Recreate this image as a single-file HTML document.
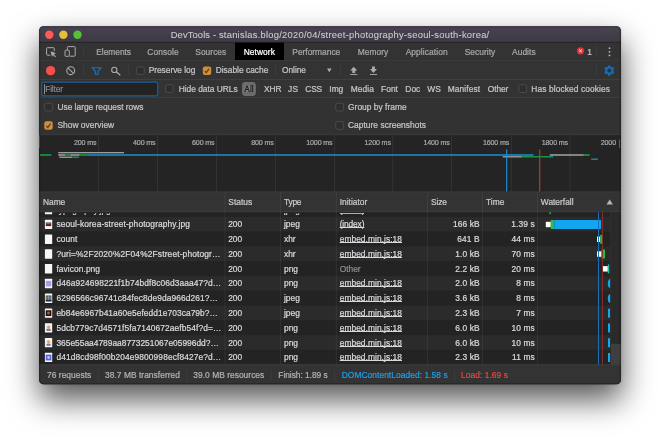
<!DOCTYPE html>
<html lang="en">
<head>
<meta charset="utf-8">
<title>DevTools - stanislas.blog/2020/04/street-photography-seoul-south-korea/</title>
<style>
html,body{margin:0;padding:0;background:#fff;}
body{width:660px;height:437px;overflow:hidden;position:relative;font-family:"Liberation Sans",sans-serif;}
#root{position:absolute;left:0;top:0;width:660px;height:437px;overflow:hidden;will-change:transform;background:#fff;}
#shadow{position:absolute;left:39.5px;top:26.5px;width:581px;height:357.5px;border-radius:4.5px;background:#2b2b2b;
  box-shadow:0 15px 31px 0.5px rgba(0,0,0,.66),0 0 3px rgba(0,0,0,.18);}
#g{position:absolute;left:0;top:0;}
#root{filter:blur(0.3px);}
.t{position:absolute;white-space:pre;line-height:12px;height:12px;font-family:"Liberation Sans",sans-serif;
  -webkit-text-stroke:0.22px currentColor;text-decoration-thickness:0.45px;text-underline-offset:0.4px;text-decoration-skip-ink:none;}
</style>
</head>
<body>
<div id="root">
<div id="shadow"></div>
<svg id="g" width="660" height="437" viewBox="0 0 660 437">
<defs>
<clipPath id="wc"><rect x="39.1" y="26.2" width="581.7" height="358.1" rx="4.5"/></clipPath>
<clipPath id="rc"><rect x="39" y="212.3" width="582" height="152.4"/></clipPath>
<linearGradient id="tg" x1="0" y1="0" x2="0" y2="1"><stop offset="0" stop-color="#48434f"/><stop offset="1" stop-color="#3e3a45"/></linearGradient>
</defs>
<g clip-path="url(#wc)">
<rect x="39" y="26" width="582" height="359" fill="#242424"/>
<rect x="39.00" y="26.00" width="582.00" height="16.20" fill="url(#tg)"/>
<rect x="39.00" y="26.20" width="582.00" height="0.60" fill="#5b5662"/>
<rect x="39.00" y="41.90" width="582.00" height="0.80" fill="#1a1a1a"/>
<circle cx="49.30" cy="34.70" r="4.20" fill="#fc5b57"/>
<circle cx="63.40" cy="34.70" r="4.20" fill="#e5bf3c"/>
<circle cx="77.50" cy="34.70" r="4.20" fill="#57c038"/>
<rect x="39.00" y="42.60" width="582.00" height="17.60" fill="#333333"/>
<rect x="235.00" y="42.70" width="49.00" height="17.50" fill="#000000"/>
<rect x="39.00" y="60.30" width="582.00" height="0.80" fill="#454545"/>
<rect x="83.40" y="46.30" width="0.70" height="10.20" fill="#414141"/>
<rect x="596.30" y="46.30" width="0.70" height="10.20" fill="#414141"/>
<rect x="39.00" y="60.80" width="582.00" height="18.40" fill="#333333"/>
<rect x="39.00" y="79.00" width="582.00" height="0.80" fill="#464646"/>
<rect x="83.40" y="65.30" width="0.70" height="10.40" fill="#414141"/>
<rect x="128.40" y="65.30" width="0.70" height="10.40" fill="#414141"/>
<rect x="275.00" y="65.30" width="0.70" height="10.40" fill="#414141"/>
<rect x="340.40" y="65.30" width="0.70" height="10.40" fill="#414141"/>
<rect x="596.30" y="65.30" width="0.70" height="10.40" fill="#414141"/>
<rect x="39.00" y="80.00" width="582.00" height="17.30" fill="#333333"/>
<rect x="39.00" y="97.30" width="582.00" height="0.80" fill="#464646"/>
<rect x="41.7" y="82.2" width="116.0" height="13.6" rx="1.2" fill="#232323" stroke="#1a5f96" stroke-width="1.2"/>
<rect x="44.20" y="84.20" width="0.70" height="10.20" fill="#bbbbbb"/>
<rect x="242.00" y="82.00" width="13.90" height="14.00" fill="#6c6c6c" rx="3.4"/>
<rect x="258.40" y="83.50" width="0.70" height="11.00" fill="#414141"/>
<rect x="39.00" y="98.10" width="582.00" height="36.50" fill="#323232"/>
<rect x="39.00" y="134.55" width="582.00" height="0.85" fill="#474747"/>
<rect x="39.00" y="135.40" width="582.00" height="56.40" fill="#242424"/>
<rect x="98.05" y="135.40" width="0.70" height="56.40" fill="#393939"/>
<rect x="157.15" y="135.40" width="0.70" height="56.40" fill="#393939"/>
<rect x="216.15" y="135.40" width="0.70" height="56.40" fill="#393939"/>
<rect x="275.25" y="135.40" width="0.70" height="56.40" fill="#393939"/>
<rect x="334.15" y="135.40" width="0.70" height="56.40" fill="#393939"/>
<rect x="392.45" y="135.40" width="0.70" height="56.40" fill="#393939"/>
<rect x="451.35" y="135.40" width="0.70" height="56.40" fill="#393939"/>
<rect x="510.85" y="135.40" width="0.70" height="56.40" fill="#393939"/>
<rect x="569.65" y="135.40" width="0.70" height="56.40" fill="#393939"/>
<rect x="39.00" y="135.50" width="0.80" height="12.50" fill="#6a6a6a"/>
<rect x="619.10" y="139.50" width="0.80" height="8.50" fill="#7a7a7a"/>
<rect x="40.00" y="154.25" width="9.30" height="1.50" fill="#17a744"/>
<rect x="49.30" y="154.25" width="2.00" height="1.50" fill="#1a8fd1"/>
<rect x="58.30" y="152.05" width="65.70" height="1.30" fill="#a3a3a3"/>
<rect x="58.30" y="154.25" width="6.90" height="1.50" fill="#a3a3a3"/>
<rect x="65.20" y="154.25" width="4.10" height="1.50" fill="#17a744"/>
<rect x="69.30" y="154.25" width="1.00" height="1.50" fill="#1a8fd1"/>
<rect x="70.30" y="154.25" width="9.40" height="1.50" fill="#a3a3a3"/>
<rect x="79.70" y="154.25" width="7.60" height="1.50" fill="#17a744"/>
<rect x="87.30" y="154.25" width="446.20" height="1.50" fill="#1a8fd1"/>
<rect x="59.30" y="156.55" width="13.00" height="1.30" fill="#a3a3a3"/>
<rect x="72.30" y="156.55" width="5.40" height="1.30" fill="#17a744"/>
<rect x="77.70" y="156.55" width="1.30" height="1.30" fill="#1a8fd1"/>
<rect x="502.70" y="156.15" width="19.10" height="1.30" fill="#a3a3a3"/>
<rect x="521.80" y="156.15" width="29.70" height="1.30" fill="#17a744"/>
<rect x="551.50" y="156.15" width="1.50" height="1.30" fill="#1a8fd1"/>
<rect x="549.80" y="154.25" width="34.00" height="1.50" fill="#a3a3a3"/>
<rect x="583.80" y="154.25" width="5.90" height="1.50" fill="#17a744"/>
<rect x="591.20" y="158.55" width="1.80" height="1.30" fill="#17a744"/>
<rect x="593.00" y="158.55" width="4.80" height="1.30" fill="#1a8fd1"/>
<rect x="506.10" y="149.30" width="1.15" height="42.50" fill="#1b8fd6"/>
<rect x="539.20" y="149.30" width="1.05" height="42.50" fill="#b3433d"/>
<rect x="39.00" y="191.70" width="582.00" height="20.60" fill="#333333"/>
<rect x="39.00" y="191.60" width="582.00" height="0.70" fill="#3f3f3f"/>
<rect x="39.00" y="211.60" width="582.00" height="0.75" fill="#474747"/>
<g clip-path="url(#rc)">
<rect x="39.00" y="202.13" width="571.40" height="14.81" fill="#232323"/>
<rect x="39.00" y="216.91" width="571.40" height="14.81" fill="#2b2b2b"/>
<rect x="39.00" y="231.69" width="571.40" height="14.81" fill="#232323"/>
<rect x="39.00" y="246.47" width="571.40" height="14.81" fill="#2b2b2b"/>
<rect x="39.00" y="261.25" width="571.40" height="14.81" fill="#232323"/>
<rect x="39.00" y="276.03" width="571.40" height="14.81" fill="#2b2b2b"/>
<rect x="39.00" y="290.81" width="571.40" height="14.81" fill="#232323"/>
<rect x="39.00" y="305.59" width="571.40" height="14.81" fill="#2b2b2b"/>
<rect x="39.00" y="320.37" width="571.40" height="14.81" fill="#232323"/>
<rect x="39.00" y="335.15" width="571.40" height="14.81" fill="#2b2b2b"/>
<rect x="39.00" y="349.93" width="571.40" height="14.81" fill="#232323"/>
<rect x="39.00" y="364.71" width="571.40" height="14.81" fill="#2b2b2b"/>
<rect x="610.30" y="212.00" width="10.80" height="153.00" fill="#2a2a2a"/>
<rect x="549.40" y="211.00" width="1.50" height="3.10" fill="#1fc343"/>
<rect x="545.80" y="221.80" width="5.00" height="5.40" fill="#ffffff"/>
<rect x="550.80" y="220.00" width="3.50" height="9.00" fill="#1fc343"/>
<rect x="554.30" y="220.00" width="46.70" height="9.00" fill="#12a6f2"/>
<rect x="597.00" y="236.58" width="3.20" height="5.40" fill="#ffffff"/>
<rect x="600.20" y="234.78" width="2.60" height="9.00" fill="#1fc343"/>
<rect x="597.00" y="251.36" width="4.50" height="5.40" fill="#ffffff"/>
<rect x="601.50" y="249.56" width="3.50" height="9.00" fill="#1fc343"/>
<rect x="602.80" y="266.14" width="5.00" height="5.40" fill="#ffffff"/>
<rect x="607.80" y="264.34" width="1.40" height="9.00" fill="#18c3a0"/>
<path d="M614 279.12H610.6Q607.8 279.12 607.8 283.62Q607.8 288.12 610.6 288.12H614Z" fill="#12a6f2"/>
<path d="M614 293.90H610.6Q607.8 293.90 607.8 298.40Q607.8 302.90 610.6 302.90H614Z" fill="#12a6f2"/>
<rect x="608.00" y="308.68" width="2.30" height="9.00" fill="#12a6f2"/>
<rect x="608.00" y="323.46" width="2.30" height="9.00" fill="#12a6f2"/>
<rect x="608.00" y="338.24" width="2.30" height="9.00" fill="#12a6f2"/>
<rect x="608.00" y="353.02" width="2.30" height="9.00" fill="#12a6f2"/>
<rect x="598.00" y="212.00" width="1.00" height="153.00" fill="#1b6fb8"/>
<rect x="601.90" y="212.00" width="1.00" height="153.00" fill="#8c2f2b"/>
<rect x="610.30" y="212.00" width="10.80" height="153.00" fill="#2a2a2a"/>
<rect x="610.30" y="212.00" width="0.60" height="153.00" fill="#333333"/>
<rect x="610.90" y="343.80" width="10.20" height="20.60" fill="#3f3f3f"/>
<rect x="44.90" y="204.92" width="7.30" height="9.40" fill="#f7f7f7" rx="0.5"/>
<rect x="44.90" y="219.70" width="7.30" height="9.40" fill="#f7f7f7" rx="0.5"/>
<rect x="45.85" y="222.55" width="5.35" height="3.55" fill="#4e241c"/>
<rect x="46.50" y="222.90" width="4.00" height="1.30" fill="#a8604e"/>
<rect x="46.20" y="224.30" width="4.70" height="1.30" fill="#6a2e22"/>
<rect x="44.90" y="234.48" width="7.30" height="9.40" fill="#f7f7f7" rx="0.5"/>
<rect x="44.90" y="249.26" width="7.30" height="9.40" fill="#f7f7f7" rx="0.5"/>
<rect x="44.90" y="264.04" width="7.30" height="9.40" fill="#f7f7f7" rx="0.5"/>
<rect x="44.90" y="278.82" width="7.30" height="9.40" fill="#f7f7f7" rx="0.5"/>
<rect x="45.80" y="280.82" width="5.50" height="5.60" fill="#a999ef"/>
<rect x="44.90" y="293.60" width="7.30" height="9.40" fill="#f7f7f7" rx="0.5"/>
<rect x="45.70" y="295.50" width="5.70" height="5.80" fill="#2c3e5c"/>
<rect x="46.40" y="296.20" width="1.00" height="3.60" fill="#c9a545"/>
<rect x="48.00" y="296.00" width="1.00" height="3.90" fill="#6f94c9"/>
<rect x="49.50" y="296.20" width="1.00" height="3.60" fill="#c9a545"/>
<rect x="45.70" y="300.00" width="5.70" height="1.30" fill="#1d2a40"/>
<rect x="44.90" y="308.38" width="7.30" height="9.40" fill="#f7f7f7" rx="0.5"/>
<rect x="45.70" y="310.28" width="5.70" height="5.80" fill="#26100a"/>
<rect x="47.00" y="311.38" width="3.00" height="3.40" fill="#8a4326" rx="1.3"/>
<rect x="47.60" y="311.98" width="1.80" height="1.60" fill="#b5683e" rx="0.8"/>
<rect x="44.90" y="323.16" width="7.30" height="9.40" fill="#f7f7f7" rx="0.5"/>
<rect x="45.80" y="324.96" width="5.50" height="6.00" fill="#f8e3d3"/>
<rect x="47.20" y="325.66" width="2.70" height="2.90" fill="#e39a70" rx="1.35"/>
<rect x="46.40" y="328.86" width="4.30" height="2.10" fill="#5f7fb5" rx="0.9"/>
<rect x="48.00" y="328.46" width="1.10" height="1.00" fill="#e39a70"/>
<rect x="44.90" y="337.94" width="7.30" height="9.40" fill="#f7f7f7" rx="0.5"/>
<rect x="45.80" y="339.74" width="5.50" height="6.00" fill="#f8e3d3"/>
<rect x="47.20" y="340.44" width="2.70" height="2.90" fill="#e39a70" rx="1.35"/>
<rect x="46.40" y="343.64" width="4.30" height="2.10" fill="#5f7fb5" rx="0.9"/>
<rect x="48.00" y="343.24" width="1.10" height="1.00" fill="#e39a70"/>
<rect x="44.90" y="352.72" width="7.30" height="9.40" fill="#f7f7f7" rx="0.5"/>
<rect x="45.70" y="354.62" width="5.70" height="5.80" fill="#5563ea"/>
<rect x="47.10" y="356.02" width="2.90" height="3.00" fill="#a6adf6" rx="1.45"/>
<rect x="47.90" y="356.82" width="1.30" height="1.40" fill="#e4e6ff" rx="0.65"/>
</g>
<rect x="224.65" y="192.30" width="0.70" height="172.60" fill="#ffffff" opacity="0.085"/>
<rect x="280.25" y="192.30" width="0.70" height="172.60" fill="#ffffff" opacity="0.085"/>
<rect x="335.85" y="192.30" width="0.70" height="172.60" fill="#ffffff" opacity="0.085"/>
<rect x="427.35" y="192.30" width="0.70" height="172.60" fill="#ffffff" opacity="0.085"/>
<rect x="482.35" y="192.30" width="0.70" height="172.60" fill="#ffffff" opacity="0.085"/>
<rect x="537.35" y="192.30" width="0.70" height="172.60" fill="#ffffff" opacity="0.085"/>
<rect x="39.00" y="364.90" width="582.00" height="20.00" fill="#333333"/>
<rect x="39.00" y="364.50" width="582.00" height="0.75" fill="#464646"/>
<rect x="97.80" y="369.90" width="0.70" height="10.50" fill="#414141"/>
<rect x="186.50" y="369.90" width="0.70" height="10.50" fill="#414141"/>
<rect x="270.80" y="369.90" width="0.70" height="10.50" fill="#414141"/>
<rect x="334.20" y="369.90" width="0.70" height="10.50" fill="#414141"/>
<rect x="454.20" y="369.90" width="0.70" height="10.50" fill="#414141"/>
<path d="M54.2 51.2V48.4Q54.2 47.7 53.5 47.7H47.3Q46.6 47.7 46.6 48.4V54.5Q46.6 55.2 47.3 55.2H50.2" fill="none" stroke="#a9abae" stroke-width="1.0"/>
<path d="M50.6 51.2L56.0 53.3L53.8 54.2L56.0 56.4L55.1 57.2L52.9 55.0L52.0 57.1Z" fill="#a9abae"/>
<path d="M67.4 49.6V47.4Q67.4 46.6 68.2 46.6H74.4Q75.2 46.6 75.2 47.4V55.4Q75.2 56.2 74.4 56.2H69.6" fill="none" stroke="#a9abae" stroke-width="1.0"/>
<rect x="65.0" y="50.2" width="4.3" height="6.1" rx="0.8" fill="none" stroke="#a9abae" stroke-width="1.0"/>
<circle cx="50.60" cy="70.65" r="4.65" fill="#f8504d"/>
<circle cx="70.7" cy="70.65" r="3.95" fill="none" stroke="#a9abae" stroke-width="1.1"/>
<path d="M67.9 67.85L73.5 73.45" fill="none" stroke="#a9abae" stroke-width="1.1"/>
<path d="M92.2 67.7H101.1L98.1 71.4V74.2H95.2V71.4Z" fill="none" stroke="#1b76c4" stroke-width="1.15" stroke-linejoin="round"/>
<circle cx="114.3" cy="69.9" r="2.6" fill="none" stroke="#a9abae" stroke-width="1.1"/>
<path d="M116.2 71.8L120.3 75.3" fill="none" stroke="#a9abae" stroke-width="1.3"/>
<path d="M327.0 68.6H331.6L329.3 72.3Z" fill="#a9abae"/>
<path d="M353.75 66.8L357.3 70.5H355.2V72.9H352.3V70.5H350.2Z" fill="#a9abae"/>
<rect x="350.20" y="74.10" width="7.10" height="0.90" fill="#a9abae"/>
<path d="M373.45 72.9L377.0 69.1H374.9V66.4H372.0V69.1H369.9Z" fill="#a9abae"/>
<rect x="369.90" y="74.10" width="7.10" height="0.90" fill="#a9abae"/>
<g fill="#176cb8"><rect x="608.05" y="65.50" width="2.5" height="2.6" rx="0.4" transform="rotate(0 609.30 70.60)"/><rect x="608.05" y="65.50" width="2.5" height="2.6" rx="0.4" transform="rotate(60 609.30 70.60)"/><rect x="608.05" y="65.50" width="2.5" height="2.6" rx="0.4" transform="rotate(120 609.30 70.60)"/><rect x="608.05" y="65.50" width="2.5" height="2.6" rx="0.4" transform="rotate(180 609.30 70.60)"/><rect x="608.05" y="65.50" width="2.5" height="2.6" rx="0.4" transform="rotate(240 609.30 70.60)"/><rect x="608.05" y="65.50" width="2.5" height="2.6" rx="0.4" transform="rotate(300 609.30 70.60)"/></g><circle cx="609.30" cy="70.60" r="3.05" fill="none" stroke="#176cb8" stroke-width="1.9"/>
<circle cx="580.50" cy="50.80" r="3.60" fill="#e2303d"/>
<path d="M579.2 49.5L581.8 52.1M581.8 49.5L579.2 52.1" fill="none" stroke="#ffffff" stroke-width="0.9"/>
<circle cx="609.50" cy="48.20" r="0.90" fill="#b9bbbe"/>
<circle cx="609.50" cy="51.80" r="0.90" fill="#b9bbbe"/>
<circle cx="609.50" cy="55.40" r="0.90" fill="#b9bbbe"/>
<path d="M609.7 199.4L612.9 204.6H606.5Z" fill="#b4b6b9"/>
<rect x="136.55" y="66.85" width="7.7" height="7.7" rx="1.7" fill="#2e2e2e" stroke="#565656" stroke-width="0.7"/>
<rect x="202.80" y="66.50" width="8.40" height="8.40" fill="#cd8f39" rx="2"/>
<path d="M204.90 70.95l1.35 1.75 2.7-3.85" fill="none" stroke="#4a3110" stroke-width="1.05"/>
<rect x="165.55" y="84.80" width="7.7" height="7.7" rx="1.7" fill="#2e2e2e" stroke="#565656" stroke-width="0.7"/>
<rect x="518.85" y="84.80" width="7.7" height="7.7" rx="1.7" fill="#2e2e2e" stroke="#565656" stroke-width="0.7"/>
<rect x="44.65" y="103.25" width="7.7" height="7.7" rx="1.7" fill="#2e2e2e" stroke="#565656" stroke-width="0.7"/>
<rect x="44.30" y="121.30" width="8.40" height="8.40" fill="#cd8f39" rx="2"/>
<path d="M46.40 125.75l1.35 1.75 2.7-3.85" fill="none" stroke="#4a3110" stroke-width="1.05"/>
<rect x="335.75" y="103.25" width="7.7" height="7.7" rx="1.7" fill="#2e2e2e" stroke="#565656" stroke-width="0.7"/>
<rect x="335.75" y="121.65" width="7.7" height="7.7" rx="1.7" fill="#2e2e2e" stroke="#565656" stroke-width="0.7"/>
<rect x="39.1" y="26.2" width="581.7" height="358.1" rx="4.5" fill="none" stroke="#000" stroke-opacity="0.2" stroke-width="2.6"/>
</g>
</svg>
<span class="t" style="top:28.85px;font-size:9.35px;color:#cbc9cf;letter-spacing:0.133px;left:170.70px;-webkit-text-stroke:0.1px currentColor;">DevTools - </span>
<span class="t" style="top:28.85px;font-size:9.35px;color:#cbc9cf;letter-spacing:0.268px;left:218.90px;-webkit-text-stroke:0.1px currentColor;">stanislas.blog/2020/04/street-photography-seoul-south-korea/</span>
<span class="t" style="top:45.55px;font-size:8.4px;color:#a6a8ab;letter-spacing:-0.028px;left:96.30px;">Elements</span>
<span class="t" style="top:45.55px;font-size:8.4px;color:#a6a8ab;letter-spacing:0.095px;left:147.30px;">Console</span>
<span class="t" style="top:45.55px;font-size:8.4px;color:#a6a8ab;letter-spacing:0.038px;left:195.30px;">Sources</span>
<span class="t" style="top:45.55px;font-size:8.4px;color:#a6a8ab;left:292.30px;">Performance</span>
<span class="t" style="top:45.55px;font-size:8.4px;color:#a6a8ab;letter-spacing:0.058px;left:357.70px;">Memory</span>
<span class="t" style="top:45.55px;font-size:8.4px;color:#a6a8ab;letter-spacing:0.092px;left:405.70px;">Application</span>
<span class="t" style="top:45.55px;font-size:8.4px;color:#a6a8ab;letter-spacing:0.042px;left:464.70px;">Security</span>
<span class="t" style="top:45.55px;font-size:8.4px;color:#a6a8ab;letter-spacing:0.070px;left:512.00px;">Audits</span>
<span class="t" style="top:45.55px;font-size:8.4px;color:#ffffff;letter-spacing:0.083px;left:243.70px;">Network</span>
<span class="t" style="top:45.55px;font-size:8.4px;color:#c4c6c9;letter-spacing:-0.600px;left:587.30px;">1</span>
<span class="t" style="top:64.30px;font-size:8.4px;color:#c4c6c9;letter-spacing:-0.035px;left:148.70px;">Preserve log</span>
<span class="t" style="top:64.30px;font-size:8.4px;color:#c4c6c9;left:215.70px;">Disable cache</span>
<span class="t" style="top:64.30px;font-size:8.4px;color:#c4c6c9;letter-spacing:-0.036px;left:282.00px;">Online</span>
<span class="t" style="top:82.80px;font-size:8.4px;color:#858789;letter-spacing:-0.171px;left:45.20px;">Filter</span>
<span class="t" style="top:82.60px;font-size:8.4px;color:#c4c6c9;letter-spacing:-0.009px;left:178.70px;">Hide data URLs</span>
<span class="t" style="top:82.60px;font-size:8.4px;color:#1c1c1c;letter-spacing:0.029px;left:244.30px;-webkit-text-stroke:0.45px #181818;text-shadow:0 0 1.5px rgba(255,255,255,.9),0 0 1px rgba(255,255,255,.7);">All</span>
<span class="t" style="top:82.60px;font-size:8.4px;color:#c4c6c9;letter-spacing:-0.129px;left:264.00px;">XHR</span>
<span class="t" style="top:82.60px;font-size:8.4px;color:#c4c6c9;letter-spacing:0.259px;left:288.00px;">JS</span>
<span class="t" style="top:82.60px;font-size:8.4px;color:#c4c6c9;letter-spacing:-0.178px;left:305.30px;">CSS</span>
<span class="t" style="top:82.60px;font-size:8.4px;color:#c4c6c9;letter-spacing:0.010px;left:329.30px;">Img</span>
<span class="t" style="top:82.60px;font-size:8.4px;color:#c4c6c9;letter-spacing:0.098px;left:350.70px;">Media</span>
<span class="t" style="top:82.60px;font-size:8.4px;color:#c4c6c9;letter-spacing:0.059px;left:381.00px;">Font</span>
<span class="t" style="top:82.60px;font-size:8.4px;color:#c4c6c9;letter-spacing:0.031px;left:405.30px;">Doc</span>
<span class="t" style="top:82.60px;font-size:8.4px;color:#c4c6c9;letter-spacing:-0.050px;left:427.30px;">WS</span>
<span class="t" style="top:82.60px;font-size:8.4px;color:#c4c6c9;letter-spacing:0.118px;left:447.70px;">Manifest</span>
<span class="t" style="top:82.60px;font-size:8.4px;color:#c4c6c9;letter-spacing:-0.071px;left:487.70px;">Other</span>
<span class="t" style="top:82.60px;font-size:8.4px;color:#c4c6c9;letter-spacing:0.099px;left:531.30px;">Has blocked cookies</span>
<span class="t" style="top:101.20px;font-size:8.4px;color:#c4c6c9;left:57.40px;">Use large request rows</span>
<span class="t" style="top:119.30px;font-size:8.4px;color:#c4c6c9;letter-spacing:0.036px;left:57.40px;">Show overview</span>
<span class="t" style="top:101.20px;font-size:8.4px;color:#c4c6c9;letter-spacing:0.037px;left:348.00px;">Group by frame</span>
<span class="t" style="top:119.40px;font-size:8.4px;color:#c4c6c9;letter-spacing:0.038px;left:348.00px;">Capture screenshots</span>
<span class="t" style="top:136.55px;font-size:7.1px;color:#a6a8ab;right:563.60px;letter-spacing:-0.13px;">200 ms</span>
<span class="t" style="top:136.55px;font-size:7.1px;color:#a6a8ab;right:504.50px;letter-spacing:-0.13px;">400 ms</span>
<span class="t" style="top:136.55px;font-size:7.1px;color:#a6a8ab;right:445.50px;letter-spacing:-0.13px;">600 ms</span>
<span class="t" style="top:136.55px;font-size:7.1px;color:#a6a8ab;right:386.40px;letter-spacing:-0.13px;">800 ms</span>
<span class="t" style="top:136.55px;font-size:7.1px;color:#a6a8ab;right:327.50px;letter-spacing:-0.13px;">1000 ms</span>
<span class="t" style="top:136.55px;font-size:7.1px;color:#a6a8ab;right:269.20px;letter-spacing:-0.13px;">1200 ms</span>
<span class="t" style="top:136.55px;font-size:7.1px;color:#a6a8ab;right:210.30px;letter-spacing:-0.13px;">1400 ms</span>
<span class="t" style="top:136.55px;font-size:7.1px;color:#a6a8ab;right:150.80px;letter-spacing:-0.13px;">1600 ms</span>
<span class="t" style="top:136.55px;font-size:7.1px;color:#a6a8ab;right:92.00px;letter-spacing:-0.13px;">1800 ms</span>
<span class="t" style="top:136.55px;font-size:7.1px;color:#a6a8ab;right:33.00px;letter-spacing:-0.13px;clip-path:inset(0 9.70px 0 0);">2000 ms</span>
<span class="t" style="top:196.10px;font-size:8.4px;color:#c9cbce;letter-spacing:-0.036px;left:43.00px;">Name</span>
<span class="t" style="top:196.10px;font-size:8.4px;color:#c9cbce;letter-spacing:0.042px;left:228.30px;">Status</span>
<span class="t" style="top:196.10px;font-size:8.4px;color:#c9cbce;letter-spacing:-0.214px;left:284.00px;">Type</span>
<span class="t" style="top:196.10px;font-size:8.4px;color:#c9cbce;letter-spacing:0.015px;left:339.70px;">Initiator</span>
<span class="t" style="top:196.10px;font-size:8.4px;color:#c9cbce;letter-spacing:-0.149px;left:431.00px;">Size</span>
<span class="t" style="top:196.10px;font-size:8.4px;color:#c9cbce;left:486.00px;">Time</span>
<span class="t" style="top:196.10px;font-size:8.4px;color:#c9cbce;left:540.80px;">Waterfall</span>
<span class="t" style="top:218.30px;font-size:8.4px;color:#d8dadd;letter-spacing:0.114px;left:56.40px;">seoul-korea-street-photography.jpg</span>
<span class="t" style="top:218.30px;font-size:8.4px;color:#d8dadd;letter-spacing:-0.095px;left:228.30px;">200</span>
<span class="t" style="top:218.30px;font-size:8.4px;color:#d8dadd;left:284.00px;">jpeg</span>
<span class="t" style="top:218.30px;font-size:8.4px;color:#d8dadd;letter-spacing:-0.144px;left:339.70px;text-decoration:underline;">(index)</span>
<span class="t" style="top:218.30px;font-size:8.4px;color:#d8dadd;right:180.20px;letter-spacing:0.12px;">166 kB</span>
<span class="t" style="top:218.30px;font-size:8.4px;color:#d8dadd;right:125.20px;letter-spacing:0.12px;">1.39 s</span>
<span class="t" style="top:233.08px;font-size:8.4px;color:#d8dadd;letter-spacing:0.120px;left:56.40px;">count</span>
<span class="t" style="top:233.08px;font-size:8.4px;color:#d8dadd;letter-spacing:-0.095px;left:228.30px;">200</span>
<span class="t" style="top:233.08px;font-size:8.4px;color:#d8dadd;left:284.00px;">xhr</span>
<span class="t" style="top:233.08px;font-size:8.4px;color:#d8dadd;letter-spacing:0.056px;left:339.70px;text-decoration:underline;">embed.min.js:18</span>
<span class="t" style="top:233.08px;font-size:8.4px;color:#d8dadd;right:180.20px;letter-spacing:0.12px;">641 B</span>
<span class="t" style="top:233.08px;font-size:8.4px;color:#d8dadd;right:125.20px;letter-spacing:0.12px;">44 ms</span>
<span class="t" style="top:247.86px;font-size:8.4px;color:#d8dadd;letter-spacing:0.149px;left:56.40px;">?uri=%2F2020%2F04%2Fstreet-photogr…</span>
<span class="t" style="top:247.86px;font-size:8.4px;color:#d8dadd;letter-spacing:-0.095px;left:228.30px;">200</span>
<span class="t" style="top:247.86px;font-size:8.4px;color:#d8dadd;left:284.00px;">xhr</span>
<span class="t" style="top:247.86px;font-size:8.4px;color:#d8dadd;letter-spacing:0.056px;left:339.70px;text-decoration:underline;">embed.min.js:18</span>
<span class="t" style="top:247.86px;font-size:8.4px;color:#d8dadd;right:180.20px;letter-spacing:0.12px;">1.0 kB</span>
<span class="t" style="top:247.86px;font-size:8.4px;color:#d8dadd;right:125.20px;letter-spacing:0.12px;">70 ms</span>
<span class="t" style="top:262.64px;font-size:8.4px;color:#d8dadd;letter-spacing:0.078px;left:56.40px;">favicon.png</span>
<span class="t" style="top:262.64px;font-size:8.4px;color:#d8dadd;letter-spacing:-0.095px;left:228.30px;">200</span>
<span class="t" style="top:262.64px;font-size:8.4px;color:#d8dadd;left:284.00px;">png</span>
<span class="t" style="top:262.64px;font-size:8.4px;color:#8a8c8f;left:339.70px;">Other</span>
<span class="t" style="top:262.64px;font-size:8.4px;color:#d8dadd;right:180.20px;letter-spacing:0.12px;">2.2 kB</span>
<span class="t" style="top:262.64px;font-size:8.4px;color:#d8dadd;right:125.20px;letter-spacing:0.12px;">20 ms</span>
<span class="t" style="top:277.42px;font-size:8.4px;color:#d8dadd;letter-spacing:0.091px;left:56.40px;">d46a924698221f1b74bdf8c06d3aaa47?d…</span>
<span class="t" style="top:277.42px;font-size:8.4px;color:#d8dadd;letter-spacing:-0.095px;left:228.30px;">200</span>
<span class="t" style="top:277.42px;font-size:8.4px;color:#d8dadd;left:284.00px;">png</span>
<span class="t" style="top:277.42px;font-size:8.4px;color:#d8dadd;letter-spacing:0.056px;left:339.70px;text-decoration:underline;">embed.min.js:18</span>
<span class="t" style="top:277.42px;font-size:8.4px;color:#d8dadd;right:180.20px;letter-spacing:0.12px;">2.0 kB</span>
<span class="t" style="top:277.42px;font-size:8.4px;color:#d8dadd;right:125.20px;letter-spacing:0.12px;">8 ms</span>
<span class="t" style="top:292.20px;font-size:8.4px;color:#d8dadd;letter-spacing:0.096px;left:56.40px;">6296566c96741c84fec8de9da966d261?…</span>
<span class="t" style="top:292.20px;font-size:8.4px;color:#d8dadd;letter-spacing:-0.095px;left:228.30px;">200</span>
<span class="t" style="top:292.20px;font-size:8.4px;color:#d8dadd;left:284.00px;">jpeg</span>
<span class="t" style="top:292.20px;font-size:8.4px;color:#d8dadd;letter-spacing:0.056px;left:339.70px;text-decoration:underline;">embed.min.js:18</span>
<span class="t" style="top:292.20px;font-size:8.4px;color:#d8dadd;right:180.20px;letter-spacing:0.12px;">3.6 kB</span>
<span class="t" style="top:292.20px;font-size:8.4px;color:#d8dadd;right:125.20px;letter-spacing:0.12px;">8 ms</span>
<span class="t" style="top:306.98px;font-size:8.4px;color:#d8dadd;letter-spacing:0.068px;left:56.40px;">eb84e6967b41a60e5efedd1e703ca79b?…</span>
<span class="t" style="top:306.98px;font-size:8.4px;color:#d8dadd;letter-spacing:-0.095px;left:228.30px;">200</span>
<span class="t" style="top:306.98px;font-size:8.4px;color:#d8dadd;left:284.00px;">jpeg</span>
<span class="t" style="top:306.98px;font-size:8.4px;color:#d8dadd;letter-spacing:0.056px;left:339.70px;text-decoration:underline;">embed.min.js:18</span>
<span class="t" style="top:306.98px;font-size:8.4px;color:#d8dadd;right:180.20px;letter-spacing:0.12px;">2.3 kB</span>
<span class="t" style="top:306.98px;font-size:8.4px;color:#d8dadd;right:125.20px;letter-spacing:0.12px;">7 ms</span>
<span class="t" style="top:321.76px;font-size:8.4px;color:#d8dadd;letter-spacing:0.101px;left:56.40px;">5dcb779c7d4571f5fa7140672aefb54f?d=…</span>
<span class="t" style="top:321.76px;font-size:8.4px;color:#d8dadd;letter-spacing:-0.095px;left:228.30px;">200</span>
<span class="t" style="top:321.76px;font-size:8.4px;color:#d8dadd;left:284.00px;">png</span>
<span class="t" style="top:321.76px;font-size:8.4px;color:#d8dadd;letter-spacing:0.056px;left:339.70px;text-decoration:underline;">embed.min.js:18</span>
<span class="t" style="top:321.76px;font-size:8.4px;color:#d8dadd;right:180.20px;letter-spacing:0.12px;">6.0 kB</span>
<span class="t" style="top:321.76px;font-size:8.4px;color:#d8dadd;right:125.20px;letter-spacing:0.12px;">10 ms</span>
<span class="t" style="top:336.54px;font-size:8.4px;color:#d8dadd;letter-spacing:0.009px;left:56.40px;">365e55aa4789aa8773251067e05996dd?…</span>
<span class="t" style="top:336.54px;font-size:8.4px;color:#d8dadd;letter-spacing:-0.095px;left:228.30px;">200</span>
<span class="t" style="top:336.54px;font-size:8.4px;color:#d8dadd;left:284.00px;">png</span>
<span class="t" style="top:336.54px;font-size:8.4px;color:#d8dadd;letter-spacing:0.056px;left:339.70px;text-decoration:underline;">embed.min.js:18</span>
<span class="t" style="top:336.54px;font-size:8.4px;color:#d8dadd;right:180.20px;letter-spacing:0.12px;">6.0 kB</span>
<span class="t" style="top:336.54px;font-size:8.4px;color:#d8dadd;right:125.20px;letter-spacing:0.12px;">10 ms</span>
<span class="t" style="top:351.32px;font-size:8.4px;color:#d8dadd;letter-spacing:0.105px;left:56.40px;">d41d8cd98f00b204e9800998ecf8427e?d…</span>
<span class="t" style="top:351.32px;font-size:8.4px;color:#d8dadd;letter-spacing:-0.095px;left:228.30px;">200</span>
<span class="t" style="top:351.32px;font-size:8.4px;color:#d8dadd;left:284.00px;">png</span>
<span class="t" style="top:351.32px;font-size:8.4px;color:#d8dadd;letter-spacing:0.056px;left:339.70px;text-decoration:underline;">embed.min.js:18</span>
<span class="t" style="top:351.32px;font-size:8.4px;color:#d8dadd;right:180.20px;letter-spacing:0.12px;">2.3 kB</span>
<span class="t" style="top:351.32px;font-size:8.4px;color:#d8dadd;right:125.20px;letter-spacing:0.12px;">11 ms</span>
<span class="t" style="top:203.52px;font-size:8.4px;color:#d8dadd;left:56.40px;clip-path:inset(9.68px 0 0 0);">typography.jpg</span>
<span class="t" style="top:203.52px;font-size:8.4px;color:#d8dadd;letter-spacing:-0.095px;left:228.30px;clip-path:inset(9.68px 0 0 0);">200</span>
<span class="t" style="top:203.52px;font-size:8.4px;color:#d8dadd;left:284.00px;clip-path:inset(9.68px 0 0 0);">jpeg</span>
<span class="t" style="top:203.52px;font-size:8.4px;color:#d8dadd;letter-spacing:-0.144px;left:339.70px;text-decoration:underline;clip-path:inset(9.68px 0 0 0);">(index)</span>
<span class="t" style="top:203.52px;font-size:8.4px;color:#d8dadd;right:180.30px;clip-path:inset(9.68px 0 0 0);">4.6 kB</span>
<span class="t" style="top:203.52px;font-size:8.4px;color:#d8dadd;right:125.30px;clip-path:inset(9.68px 0 0 0);">12 ms</span>
<span class="t" style="top:369.20px;font-size:8.4px;color:#b0b2b5;letter-spacing:0.049px;left:47.00px;">76 requests</span>
<span class="t" style="top:369.20px;font-size:8.4px;color:#b0b2b5;letter-spacing:0.052px;left:105.00px;">38.7 MB transferred</span>
<span class="t" style="top:369.20px;font-size:8.4px;color:#b0b2b5;letter-spacing:0.041px;left:193.30px;">39.0 MB resources</span>
<span class="t" style="top:369.20px;font-size:8.4px;color:#b0b2b5;letter-spacing:-0.029px;left:278.30px;">Finish: 1.89 s</span>
<span class="t" style="top:369.20px;font-size:8.4px;color:#1f9fe6;letter-spacing:0.071px;left:341.70px;">DOMContentLoaded: 1.58 s</span>
<span class="t" style="top:369.20px;font-size:8.4px;color:#e8473e;letter-spacing:0.074px;left:461.00px;">Load: 1.69 s</span>
</div>
</body>
</html>
